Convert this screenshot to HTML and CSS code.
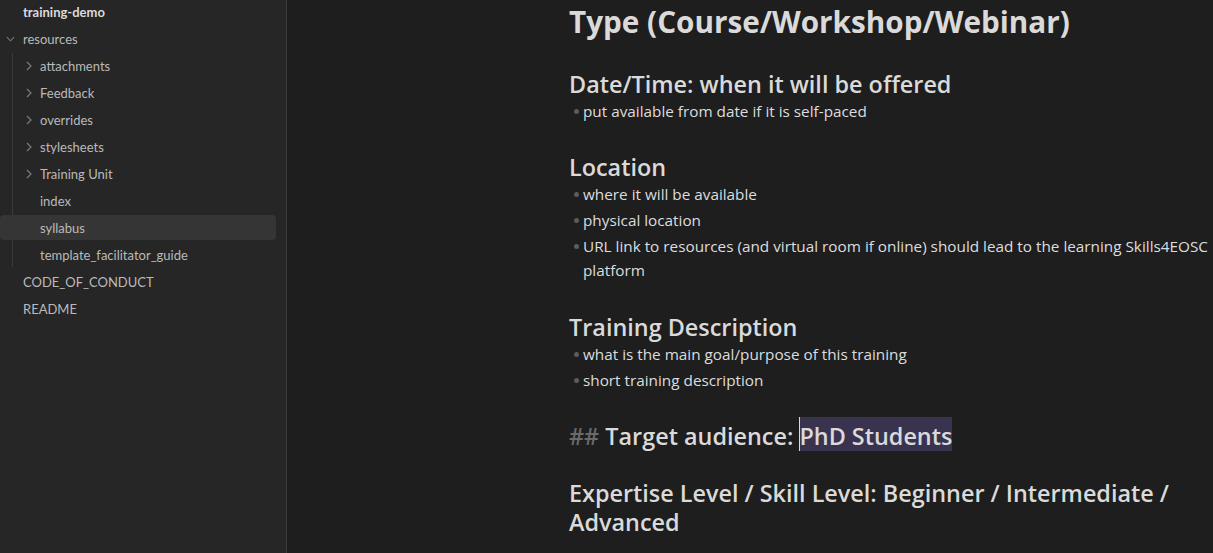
FILE: index.html
```html
<!DOCTYPE html>
<html>
<head>
<meta charset="utf-8">
<link rel="stylesheet" href="styles.css">
</head>
<body>
<div class="app">
  <nav class="sidebar">
    <div class="row root">training-demo</div>
    <div class="row folder open"><svg class="chev down" viewBox="0 0 10 6"><path d="M1 1 L5 5 L9 1"/></svg>resources</div>
    <div class="children">
      <div class="row folder"><svg class="chev" viewBox="0 0 6 10"><path d="M1 1 L5 5 L1 9"/></svg>attachments</div>
      <div class="row folder"><svg class="chev" viewBox="0 0 6 10"><path d="M1 1 L5 5 L1 9"/></svg>Feedback</div>
      <div class="row folder"><svg class="chev" viewBox="0 0 6 10"><path d="M1 1 L5 5 L1 9"/></svg>overrides</div>
      <div class="row folder"><svg class="chev" viewBox="0 0 6 10"><path d="M1 1 L5 5 L1 9"/></svg>stylesheets</div>
      <div class="row folder"><svg class="chev" viewBox="0 0 6 10"><path d="M1 1 L5 5 L1 9"/></svg>Training Unit</div>
      <div class="row file">index</div>
      <div class="row file active">syllabus</div>
      <div class="row file">template_facilitator_guide</div>
    </div>
    <div class="row top">CODE_OF_CONDUCT</div>
    <div class="row top">README</div>
  </nav>
  <main class="main">
    <div class="doc">
      <h1 class="h1">Type (Course/Workshop/Webinar)</h1>
      <h2 class="h2 s-date">Date/Time: when it will be offered</h2>
      <ul class="list">
        <li>put available from date if it is self-paced</li>
      </ul>
      <h2 class="h2 s-loc">Location</h2>
      <ul class="list">
        <li>where it will be available</li>
        <li>physical location</li>
        <li>URL link to resources (and virtual room if online) should lead to the learning Skills4EOSC platform</li>
      </ul>
      <h2 class="h2 s-desc">Training Description</h2>
      <ul class="list">
        <li>what is the main goal/purpose of this training</li>
        <li>short training description</li>
      </ul>
      <div class="raw"><span class="hash">##</span> Target audience: <span class="sel"><span class="caret"></span>PhD Students</span></div>
      <h2 class="h2 s-exp">Expertise Level / Skill Level: Beginner / Intermediate / Advanced</h2>
    </div>
  </main>
</div>
</body>
</html>
```
FILE: styles.css
```css
html, body {
  margin: 0;
  padding: 0;
  height: 100%;
  background: #1e1e1e;
  overflow: hidden;
}
body {
  font-family: "Lato", "Open Sans", sans-serif;
}
.app {
  display: flex;
  height: 553px;
}
.sidebar {
  width: 286px;
  flex: none;
  background: #262626;
  border-right: 1px solid #3c3c3c;
  margin-top: -1px;
}
.row {
  height: 25px;
  margin-bottom: 2px;
  display: flex;
  align-items: center;
  font-size: 13px;
  color: #bababa;
  padding-left: 23px;
  position: relative;
  width: 275px;
  box-sizing: border-box;
  border-radius: 4px;
}
.root {
  font-weight: 700;
  color: #dadada;
}
.chev {
  position: absolute;
  fill: none;
  stroke: #7a7a7a;
  stroke-width: 1.2;
}
.chev.down {
  width: 9px;
  height: 6px;
  left: 6px;
  top: 10px;
}
.children {
  border-left: 1px solid #3a3a3a;
  margin-left: 12px;
  margin-bottom: 2px;
}
.children .row {
  padding-left: 27px;
  width: 263px;
}
.children .row:last-child {
  margin-bottom: 0;
}
.children .chev {
  width: 6px;
  height: 10px;
  left: 13px;
  top: 8px;
}
.children .active {
  background: #353535;
  margin-left: -13px;
  width: 276px;
  padding-left: 40px;
}
.main {
  flex: 1;
  min-width: 0;
}
.doc {
  padding-left: 282px;
  width: 644px;
  color: #dcddde;
  font-family: "Open Sans", "Lato", sans-serif;
}
.h1 {
  margin: 4px 0 0;
  font-size: 29.7px;
  line-height: 36px;
  font-weight: 700;
  color: #dadada;
}
.h2 {
  margin: 0;
  font-size: 23.4px;
  line-height: 28px;
  font-weight: 600;
  color: #dadada;
}
.s-date { margin-top: 30px; }
.s-loc { margin-top: 29px; }
.s-desc { margin-top: 30px; }
.s-exp {
  margin-top: 26px;
  line-height: 29px;
}
.list {
  list-style: none;
  margin: 0;
  padding: 0 0 0 14px;
  font-size: 15.3px;
  line-height: 24px;
}
.list li {
  position: relative;
  padding: 1px 0;
}
.list li::before {
  content: "";
  position: absolute;
  left: -9px;
  top: 11px;
  width: 5px;
  height: 5px;
  border-radius: 50%;
  background: #5c5c5c;
}
.raw {
  margin-top: 26px;
  font-size: 23.4px;
  line-height: 34px;
  font-weight: 600;
  color: #dadada;
}
.hash {
  color: #6a6a6a;
}
.sel {
  position: relative;
  display: inline-block;
  line-height: 34px;
  z-index: 0;
}
.sel::before {
  content: "";
  position: absolute;
  left: 0;
  right: 0;
  top: -2px;
  bottom: 2px;
  background: #3a3350;
  z-index: -1;
}
.caret {
  position: absolute;
  left: 0;
  top: -2px;
  width: 1px;
  height: 34px;
  background: #dadada;
}
```
